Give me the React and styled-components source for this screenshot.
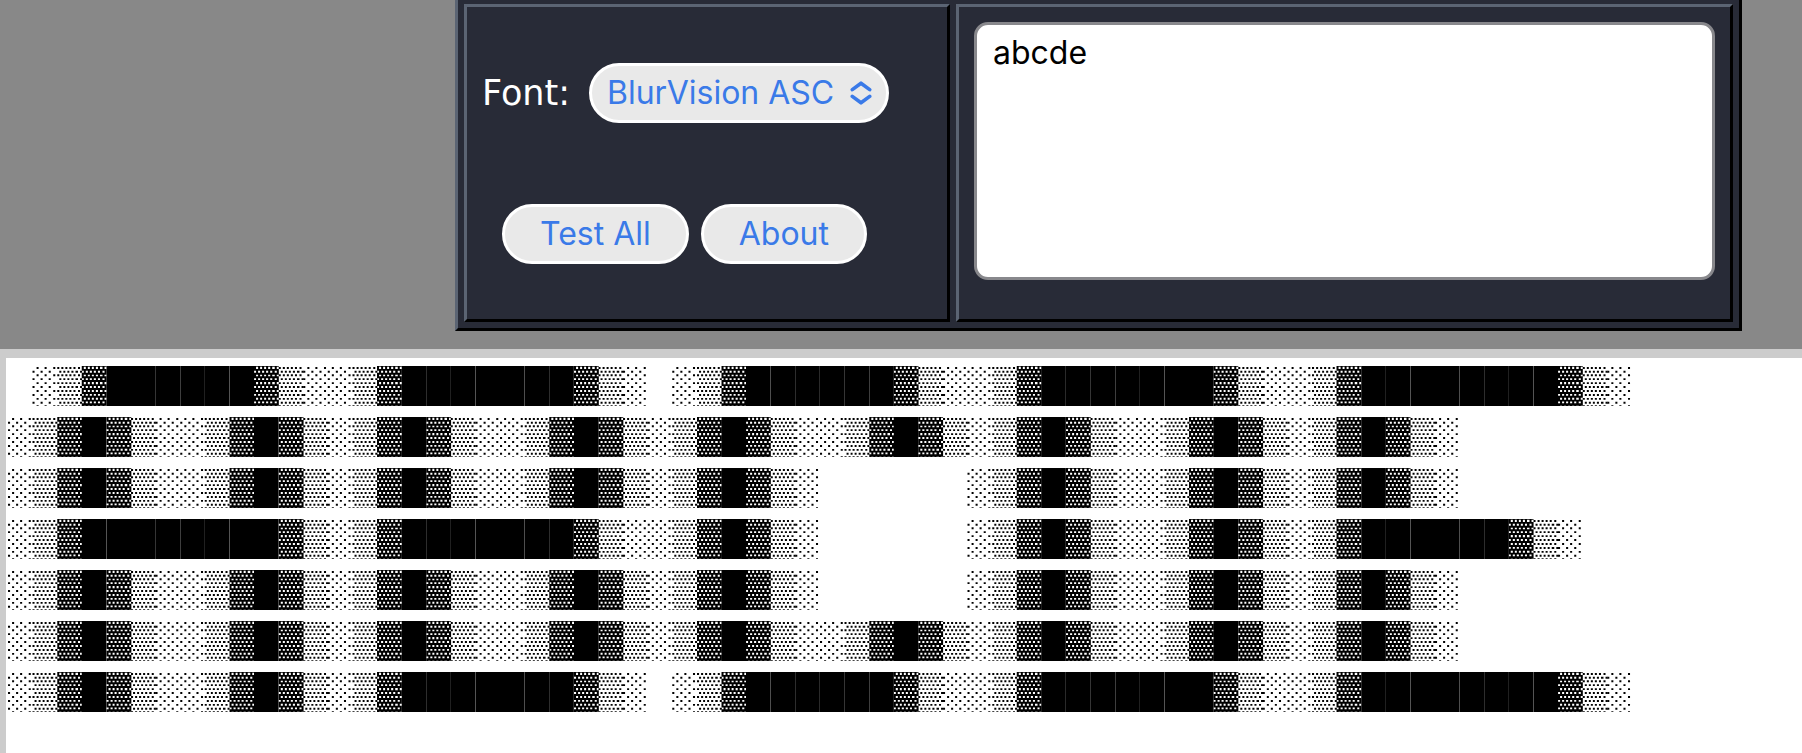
import React, { useState } from 'react';
import styled, { createGlobalStyle } from 'styled-components';

const Color = {
  PAGE: '#888888',
  PANEL: '#282b37',
  LIGHT_EDGE: '#5b6473',
  DARK_EDGE: '#000000',
  CONTROL: '#e9e9e9',
  BLUE: '#3a7ae8',
  FRAME: '#cccccc',
  WHITE: '#ffffff',
};

const ART = [
  ' ░▒▓██████▓▒░░▒▓███████▓▒░ ░▒▓██████▓▒░░▒▓███████▓▒░░▒▓████████▓▒░',
  '░▒▓█▓▒░░▒▓█▓▒░▒▓█▓▒░░▒▓█▓▒░▒▓█▓▒░░▒▓█▓▒░▒▓█▓▒░░▒▓█▓▒░▒▓█▓▒░',
  '░▒▓█▓▒░░▒▓█▓▒░▒▓█▓▒░░▒▓█▓▒░▒▓█▓▒░      ░▒▓█▓▒░░▒▓█▓▒░▒▓█▓▒░',
  '░▒▓████████▓▒░▒▓███████▓▒░░▒▓█▓▒░      ░▒▓█▓▒░░▒▓█▓▒░▒▓██████▓▒░',
  '░▒▓█▓▒░░▒▓█▓▒░▒▓█▓▒░░▒▓█▓▒░▒▓█▓▒░      ░▒▓█▓▒░░▒▓█▓▒░▒▓█▓▒░',
  '░▒▓█▓▒░░▒▓█▓▒░▒▓█▓▒░░▒▓█▓▒░▒▓█▓▒░░▒▓█▓▒░▒▓█▓▒░░▒▓█▓▒░▒▓█▓▒░',
  '░▒▓█▓▒░░▒▓█▓▒░▒▓███████▓▒░ ░▒▓██████▓▒░░▒▓███████▓▒░░▒▓████████▓▒░',
].join('\n');

const GlobalStyle = createGlobalStyle`
  body {
    margin: 0;
    background-color: ${Color.PAGE};
  }
`;

const Page = styled.div`
  min-height: 100vh;
  display: flex;
  flex-direction: column;
`;

const Header = styled.header`
  padding: 0 60px 18px 455px;
`;

const Panel = styled.div`
  display: flex;
  gap: 6px;
  padding: 4px 6px 6px;
  border: 3px solid ${Color.DARK_EDGE};
  border-left-color: ${Color.LIGHT_EDGE};
  border-top: none;
  background-color: ${Color.PANEL};
`;

const Cell = styled.div`
  box-sizing: border-box;
  padding: 15px;
  border: 3px solid;
  border-color: ${Color.LIGHT_EDGE} ${Color.DARK_EDGE} ${Color.DARK_EDGE} ${Color.LIGHT_EDGE};
`;

const Settings = styled(Cell)`
  width: 486px;
  flex-shrink: 0;
  display: flex;
  flex-direction: column;
  justify-content: center;
  gap: 81px;
`;

const Editor = styled(Cell)`
  flex: 1;
  min-width: 0;
  padding-bottom: 39px;
`;

const FontRow = styled.div`
  display: flex;
  align-items: center;
  gap: 19px;
`;

const Label = styled.label`
  color: ${Color.WHITE};
  font-family: 'DejaVu Sans', sans-serif;
  font-size: 35px;
  line-height: 42px;
`;

const SelectBox = styled.div`
  position: relative;
  width: 300px;
`;

const Select = styled.select`
  appearance: none;
  display: block;
  box-sizing: border-box;
  width: 100%;
  height: 60px;
  margin: 0;
  padding: 0 50px 0 15px;
  border: 3px solid ${Color.WHITE};
  border-radius: 30px;
  background-color: ${Color.CONTROL};
  color: ${Color.BLUE};
  font-family: Inter, sans-serif;
  font-size: 32px;
`;

const Chevrons = styled.svg`
  position: absolute;
  top: 18px;
  right: 16px;
  width: 24px;
  height: 24px;
  pointer-events: none;
`;

const ButtonRow = styled.div`
  display: flex;
  gap: 12px;
  padding-left: 20px;
`;

const Button = styled.button`
  height: 60px;
  padding: 0 35px;
  border: 3px solid ${Color.WHITE};
  border-radius: 30px;
  background-color: ${Color.CONTROL};
  color: ${Color.BLUE};
  font-family: Inter, sans-serif;
  font-size: 32px;
`;

const TextArea = styled.textarea`
  display: block;
  box-sizing: border-box;
  width: 100%;
  height: 258px;
  padding: 8px 16px;
  border: 3px solid #88888c;
  border-radius: 14px;
  outline: none;
  resize: none;
  background-color: ${Color.WHITE};
  color: #000000;
  font-family: Inter, sans-serif;
  font-size: 32px;
  line-height: 39px;
`;

const Output = styled.main`
  flex: 1;
  padding: 3px 0 0 2px;
  border-top: 9px solid ${Color.FRAME};
  border-left: 6px solid ${Color.FRAME};
  background-color: ${Color.WHITE};
`;

// the block glyphs nearly fill the line, the mask keeps a clear gap between rows
const Art = styled.pre`
  margin: 0;
  color: #000000;
  font-family: 'Liberation Mono', monospace;
  font-size: 41px;
  line-height: 51px;
  mask-image: repeating-linear-gradient(
    transparent 0 5px,
    #000000 5px 45px,
    transparent 45px 51px
  );
`;

const App = () => {
  const [text, setText] = useState('abcde');

  return (
    <>
      <GlobalStyle />
      <Page>
        <Header>
          <Panel>
            <Settings>
              <FontRow>
                <Label htmlFor="font">Font:</Label>
                <SelectBox>
                  <Select id="font">
                    <option>BlurVision ASCII</option>
                  </Select>
                  <Chevrons viewBox="0 0 24 24" fill="none" stroke={Color.BLUE} strokeWidth="3.6" strokeLinecap="round" strokeLinejoin="round">
                    <path d="M3.3 8.6 12 2.2l8.7 6.4" />
                    <path d="M3.3 15.4l8.7 6.4 8.7-6.4" />
                  </Chevrons>
                </SelectBox>
              </FontRow>
              <ButtonRow>
                <Button type="button">Test All</Button>
                <Button type="button">About</Button>
              </ButtonRow>
            </Settings>
            <Editor>
              <TextArea
                aria-label="Text"
                spellCheck={false}
                value={text}
                onChange={(e) => setText(e.target.value)}
              />
            </Editor>
          </Panel>
        </Header>
        <Output>
          <Art>{ART}</Art>
        </Output>
      </Page>
    </>
  );
};

export default App;
